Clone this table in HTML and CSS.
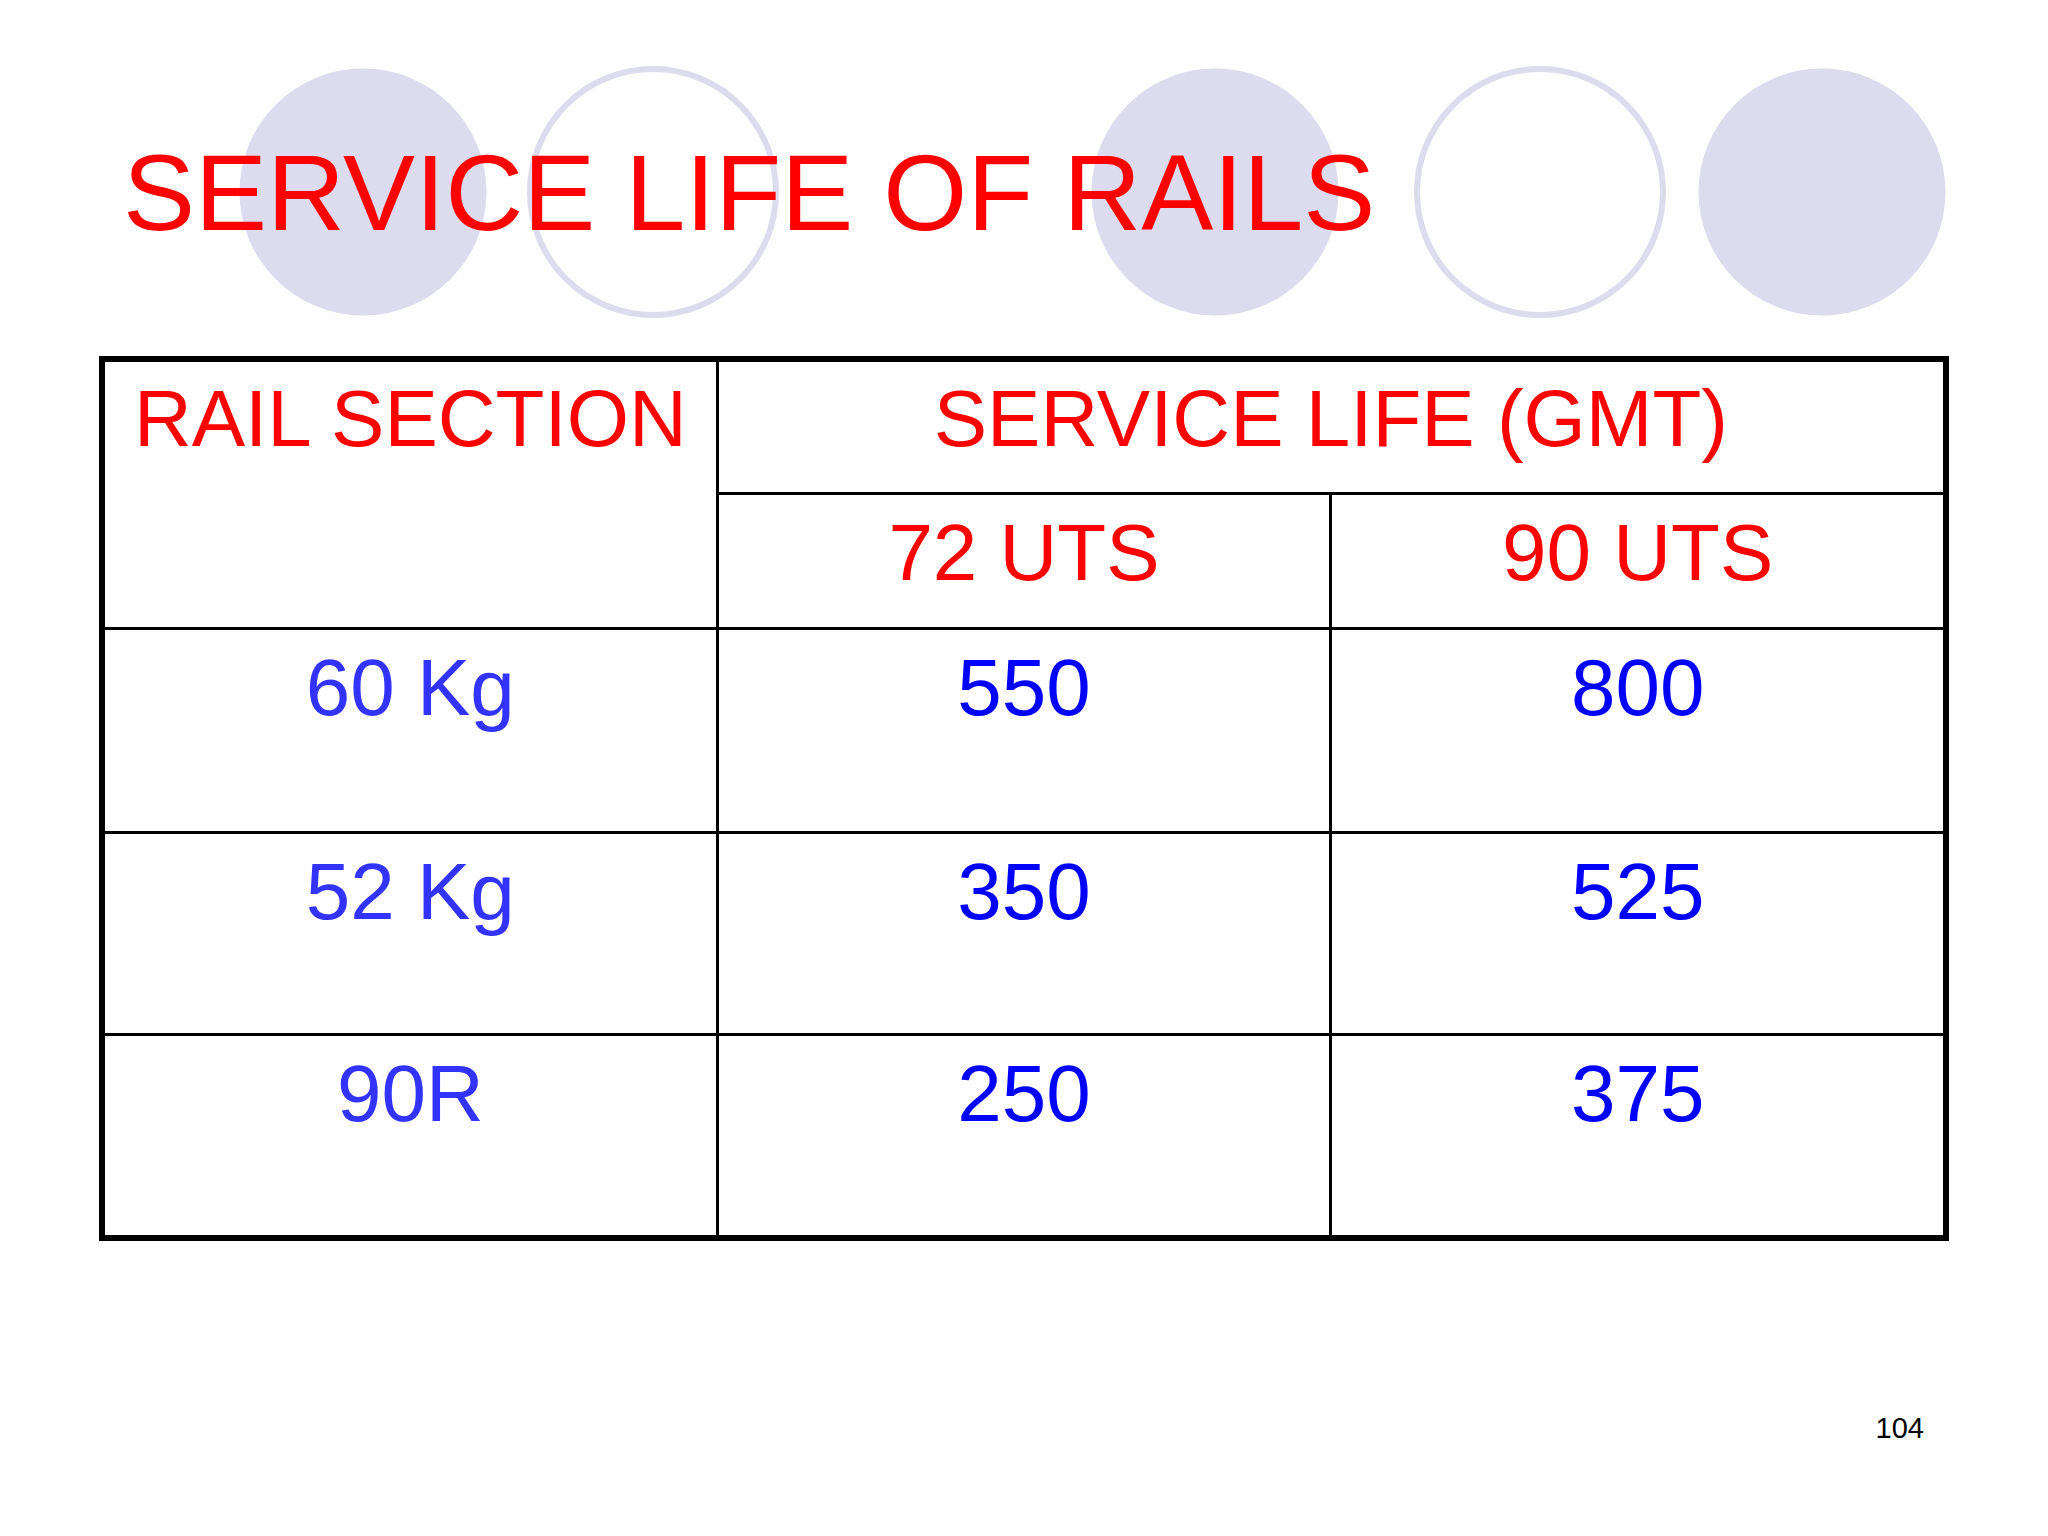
FILE: index.html
```html
<!DOCTYPE html>
<html>
<head>
<meta charset="utf-8">
<link rel="stylesheet" href="styles.css">
</head>
<body>
<div class="slide">
  <svg class="circles" width="2048" height="340" viewBox="0 0 2048 340" aria-hidden="true">
    <circle cx="363" cy="192" r="123.5" fill="#dcdcee"/>
    <circle cx="653" cy="192" r="123" fill="none" stroke="#dcdcee" stroke-width="6"/>
    <circle cx="1215" cy="192" r="123.5" fill="#dcdcee"/>
    <circle cx="1540" cy="192" r="123" fill="none" stroke="#dcdcee" stroke-width="6"/>
    <circle cx="1822" cy="192" r="123.5" fill="#dcdcee"/>
  </svg>
  <h1 class="title">SERVICE LIFE OF RAILS</h1>
  <div class="table">
    <div class="cell head span-rows">RAIL SECTION</div>
    <div class="cell head span-cols">SERVICE LIFE (GMT)</div>
    <div class="cell head">72 UTS</div>
    <div class="cell head">90 UTS</div>
    <div class="cell label">60 Kg</div>
    <div class="cell num">550</div>
    <div class="cell num">800</div>
    <div class="cell label">52 Kg</div>
    <div class="cell num">350</div>
    <div class="cell num">525</div>
    <div class="cell label">90R</div>
    <div class="cell num">250</div>
    <div class="cell num">375</div>
  </div>
  <div class="page-num">104</div>
</div>
</body>
</html>
```
FILE: styles.css
```css
html, body {
  margin: 0;
  padding: 0;
  background: #ffffff;
}

.slide {
  position: relative;
  width: 2048px;
  height: 1536px;
  display: flex;
  flex-direction: column;
  font-family: "Liberation Sans", Arial, sans-serif;
  background: #fefefe;
  overflow: hidden;
}

.circles {
  position: absolute;
  left: 0;
  top: 0;
  z-index: 0;
}

.title {
  position: relative;
  z-index: 1;
  margin: 139px 0 0 123px;
  font-size: 108px;
  line-height: 1;
  font-weight: normal;
  color: #ff0000;
  white-space: nowrap;
}

.table {
  position: relative;
  z-index: 1;
  margin: 109px 0 0 99px;
  width: 1850px;
  box-sizing: border-box;
  border: 6px solid #000;
  background: #000;
  display: grid;
  grid-template-columns: 1fr 1fr 1fr;
  grid-template-rows: 130px 132px 201px 199px 199px;
  gap: 3px;
}

.cell {
  background: #fefefe;
  text-align: center;
  font-size: 80px;
  line-height: 1;
  padding-top: 18px;
  box-sizing: border-box;
}

.head {
  color: #ff0000;
}

.span-rows {
  grid-row: 1 / 3;
  padding-top: 17px;
}

.span-cols {
  grid-column: 2 / 4;
  padding-top: 17px;
}

.label {
  color: #3333ff;
}

.num {
  color: #0000ff;
}

.page-num {
  align-self: flex-end;
  margin: 173px 124px 0 0;
  font-size: 29px;
  line-height: 1;
  color: #000;
}
```
